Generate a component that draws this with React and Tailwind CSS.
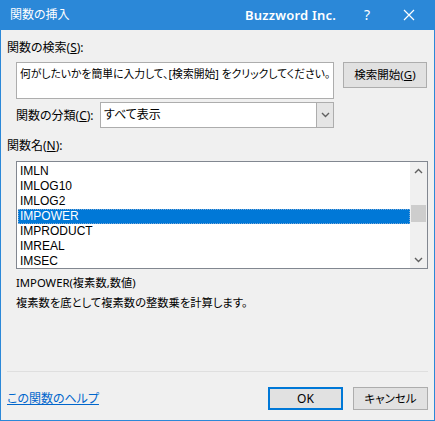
import React from 'react';

const items = ['IMLN', 'IMLOG10', 'IMLOG2', 'IMPOWER', 'IMPRODUCT', 'IMREAL', 'IMSEC'];

function Chevron({ up }) {
  return (
    <svg width="9" height="6" viewBox="0 0 9 6" className="block">
      <path
        d={up ? 'M1 5 L4.5 1.5 L8 5' : 'M1 1 L4.5 4.5 L8 1'}
        fill="none"
        stroke="#606060"
        strokeWidth="1.4"
      />
    </svg>
  );
}

export default function App() {
  const font = { fontFamily: '"Noto Sans", "Noto Sans CJK JP", sans-serif' };

  return (
    <div
      className="w-[435px] h-[421px] flex flex-col bg-[#f0f0f0] border-x border-b border-[#2b88d8] text-[12px] text-black overflow-hidden [font-feature-settings:'palt']"
      style={font}
    >
      {/* title bar */}
      <div className="h-[30px] shrink-0 flex items-center bg-[#2b88d8] text-white -mx-px">
        <span className="pl-[10px] w-[245px] text-[12px] leading-none">関数の挿入</span>
        <span className="text-[13px] font-semibold leading-none tracking-[0.2px]">Buzzword Inc.</span>
        <span className="ml-[28px] text-[14px] leading-none">?</span>
        <svg width="12" height="12" viewBox="0 0 12 12" className="ml-[33px]">
          <path d="M1 1 L11 11 M11 1 L1 11" stroke="white" strokeWidth="1.2" />
        </svg>
      </div>

      <div className="flex-1 flex flex-col pl-[6px] pr-[6px]">
        <div className="mt-[10px] h-[15px] leading-[15px]">
          関数の検索(<span className="underline">S</span>):
        </div>

        <div className="mt-[7px] flex items-start pl-[9px]">
          <div className="w-[318px] h-[37px] bg-white border border-[#adadad] px-[3px] pt-[3px] leading-[15px] text-[10.8px] whitespace-nowrap overflow-hidden">
            何がしたいかを簡単に入力して、[検索開始] をクリックしてください。
          </div>
          <button className="ml-[9px] w-[84px] h-[26px] bg-[#e1e1e1] border border-[#adadad] leading-none text-[11.5px]">
            検索開始(<span className="underline">G</span>)
          </button>
        </div>

        <div className="mt-[3px] flex items-center pl-[9px]">
          <span className="w-[84px] leading-[15px]">
            関数の分類(<span className="underline">C</span>):
          </span>
          <div className="w-[234px] h-[26px] bg-white border border-[#adadad] flex">
            <span className="flex-1 pl-[3px] leading-[24px]">すべて表示</span>
            <div className="w-[17px] h-full bg-[#e5e5e5] border-l border-[#adadad] flex items-center justify-center">
              <Chevron />
            </div>
          </div>
        </div>

        <div className="mt-[10px] h-[15px] leading-[15px]">
          関数名(<span className="underline">N</span>):
        </div>

        <div className="mt-[8px] ml-[9px] w-[412px] h-[108px] bg-white border border-[#828790] flex">
          <div className="flex-1 pt-[2px] pl-[1px] font-['Liberation_Sans',sans-serif] text-[12px]">
            {items.map((it) =>
              it === 'IMPOWER' ? (
                <div
                  key={it}
                  className="h-[15px] leading-[15px] pl-[2px] bg-[#0078d7] text-white outline outline-1 outline-dotted outline-[#7aa8d6] -outline-offset-1"
                >
                  {it}
                </div>
              ) : (
                <div key={it} className="h-[15px] leading-[15px] pl-[2px]">
                  {it}
                </div>
              )
            )}
          </div>
          <div className="w-[17px] bg-[#f0f0f0] flex flex-col items-center">
            <div className="h-[17px] flex items-center justify-center">
              <Chevron up />
            </div>
            <div className="flex-1 w-full px-px">
              <div className="mt-[26px] h-[17px] bg-[#cdcdcd]" />
            </div>
            <div className="h-[17px] flex items-center justify-center">
              <Chevron />
            </div>
          </div>
        </div>

        <div className="mt-[6px] ml-[9px] h-[15px] leading-[15px] text-[11.3px]">IMPOWER(複素数,数値)</div>
        <div className="mt-[5px] ml-[9px] h-[15px] leading-[15px] text-[11.3px]">
          複素数を底として複素数の整数乗を計算します。
        </div>

        <div className="flex-1" />
        <div className="h-px bg-[#dfdfdf]" />

        <div className="mt-[15px] mb-[10px] flex items-center">
          <a className="text-[#0066cc] underline leading-[15px]">この関数のヘルプ</a>
          <div className="flex-1" />
          <button className="w-[75px] h-[23px] bg-[#e1e1e1] border-2 border-[#0078d7] leading-none">OK</button>
          <button className="ml-[10px] w-[75px] h-[23px] bg-[#e1e1e1] border border-[#adadad] leading-none text-[11.5px]">
            キャンセル
          </button>
        </div>
      </div>
    </div>
  );
}
